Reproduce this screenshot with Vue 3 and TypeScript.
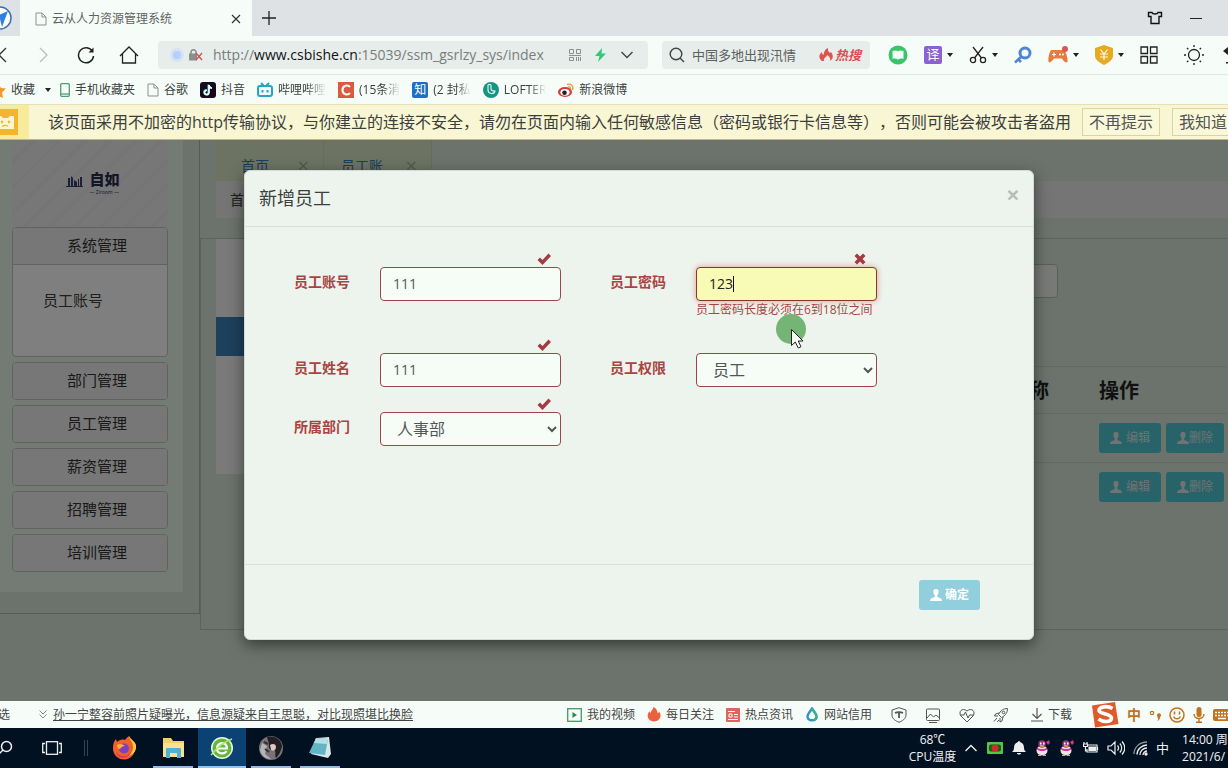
<script setup lang="ts">
import { ref } from 'vue'

const account = ref('111')
const password = ref('123')
const fullName = ref('111')
const role = ref('员工')
const department = ref('人事部')
const keyword = ref('中国多地出现汛情')
const menus: string[] = ['部门管理', '员工管理', '薪资管理', '招聘管理', '培训管理']
const rows: number[] = [1, 2]
</script>

<template>
  <div class="screen">
    <header class="tabbar">
      <svg class="brand" width="20" height="36" viewBox="0 0 20 36">
        <circle cx="0" cy="18" r="11" fill="#fff" stroke="#3d6fb5" stroke-width="1.5" />
        <path d="M8 11 L-8 18 L0 19 L2 27 Z" fill="#2f7fe0" />
      </svg>
      <div class="tab">
        <svg width="12" height="14" viewBox="0 0 12 14" fill="none" stroke="#8b918e"><path d="M1 1h6l4 4v8H1zM7 1v4h4" /></svg>
        <span class="tab-title">云从人力资源管理系统</span>
        <button class="plain" aria-label="关闭标签"><svg width="10" height="10" viewBox="0 0 10 10" stroke="#333" stroke-width="1.2"><path d="M1 1l8 8M9 1l-8 8" /></svg></button>
      </div>
      <button class="plain plus" aria-label="新标签"><svg width="14" height="14" viewBox="0 0 14 14" stroke="#222" stroke-width="1.3"><path d="M7 0v14M0 7h14" /></svg></button>
      <div class="win">
        <button class="plain" aria-label="皮肤"><svg width="16" height="14" viewBox="0 0 16 14" fill="none" stroke="#111" stroke-width="1.4"><path d="M5 1.5H1.5V5.500H4V12.500H12V5.500H14.500V1.500H11C10.500 3.500 5.500 3.500 5 1.500z" /></svg></button>
        <button class="plain" aria-label="最小化"><svg width="12" height="14" viewBox="0 0 12 14" stroke="#222"><path d="M0 7.5h12" /></svg></button>
      </div>
    </header>

    <div class="toolbar">
      <div class="nav">
        <button class="plain" aria-label="后退"><svg width="7" height="18" viewBox="0 0 7 18" fill="none" stroke="#333" stroke-width="1.3"><path d="M6 2L-1 9l7 7" /></svg></button>
        <button class="plain" aria-label="前进"><svg width="10" height="18" viewBox="0 0 10 18" fill="none" stroke="#b9bfbc" stroke-width="1.3"><path d="M1 2l7 7-7 7" /></svg></button>
        <button class="plain" aria-label="刷新"><svg width="18" height="18" viewBox="0 0 18 18" fill="none" stroke="#222" stroke-width="1.5"><path d="M15.500 5.500A7.500 7.500 0 1 0 16.500 10" /><path d="M16.500 1.500v5h-5z" fill="#222" stroke="none" /></svg></button>
        <button class="plain" aria-label="主页"><svg width="20" height="18" viewBox="0 0 20 18" fill="none" stroke="#222" stroke-width="1.3"><path d="M1 10L10 1l9 9M3.500 8v9h13V8" /></svg></button>
      </div>
      <div class="address">
        <svg width="14" height="14" viewBox="0 0 14 14"><circle cx="7" cy="7" r="7" fill="#d5e2f5" /><circle cx="7" cy="7" r="4" fill="#b5cff6" /></svg>
        <svg class="lock" width="14" height="12" viewBox="0 0 14 12"><path d="M2 5V3.500C2 0 7 0 7 3V5" fill="none" stroke="#8a8f8c" stroke-width="1.500" /><rect x="0" y="4.500" width="8" height="7" fill="#8a8f8c" /><path d="M7 4l6 7M13 4l-6 7" stroke="#d0504c" stroke-width="1.300" /></svg>
        <a class="url" href="#">http://<b>www.csbishe.cn</b>:15039/ssm_gsrlzy_sys/index</a>
        <div class="address-tools">
          <svg width="12" height="12" viewBox="0 0 12 12" fill="none" stroke="#8a908d"><path d="M.5.5h4v4h-4zM7.500.5h4v4h-4zM0 6.500h12M.5 8.500h4v3h-4zM7.500 8v4M9.500 8v4M11.500 8v4" /></svg>
          <svg width="11" height="14" viewBox="0 0 11 14"><path d="M7 0L0 8h4.500L3 14 11 5.500H6.500z" fill="#2fc977" /></svg>
          <svg width="14" height="8" viewBox="0 0 14 8" fill="none" stroke="#444" stroke-width="1.400"><path d="M1.500 1L7 6.500 12.500 1" /></svg>
        </div>
      </div>
      <div class="search">
        <svg width="16" height="16" viewBox="0 0 16 16" fill="none" stroke="#444" stroke-width="1.400"><circle cx="7" cy="7" r="5.800" /><path d="M11 11l4 4" /></svg>
        <input v-model="keyword" aria-label="搜索" />
        <span class="hot"><svg width="14" height="14" viewBox="0 0 14 14"><path d="M3 13C-1 10 0 6 3 4c0 2 .5 2.500 1.500 3C5 4 6 1 9 0c-.5 3 1 4 2 5l1-1c3 4 2 7-1 9 1-3-1-5-3-6 0 2-4 3-3 6z" fill="#e0524e" /></svg>热搜</span>
      </div>
      <div class="tools">
        <button class="plain" aria-label="阅读"><svg width="20" height="20" viewBox="0 0 20 20"><circle cx="10" cy="10" r="9.500" fill="#37c46b" /><path d="M4.500 6C7 5 9 5.500 10 6.500 11 5.500 13 5 15.500 6v8c-2-.7-4-.5-5.500.7C8.500 13.500 6.500 13.300 4.500 14z" fill="#f2fdf6" /></svg></button>
        <button class="plain" aria-label="翻译"><span class="yi">译</span><i class="caret"></i></button>
        <button class="plain" aria-label="截图"><svg width="18" height="18" viewBox="0 0 18 18" fill="none" stroke="#222" stroke-width="1.300"><path d="M4 1l8.500 11M14 1L5.500 12" /><circle cx="4" cy="14" r="2.600" /><circle cx="14" cy="14" r="2.600" /></svg><i class="caret"></i></button>
        <button class="plain" aria-label="密码"><svg width="18" height="18" viewBox="0 0 18 18" fill="none" stroke="#5083d4"><circle cx="11" cy="7" r="5" stroke-width="3" /><path d="M7.500 10.500L1 16.500M4 13l3 3" stroke-width="2.600" /></svg></button>
        <button class="plain" aria-label="游戏"><svg width="20" height="18" viewBox="0 0 20 18"><path d="M3 4h13c2 2 4 8 3.500 12-2 1.500-4-1-5.500-3.500H6C4 15 2 17.500.5 16 0 12 1 7 3 4z" fill="#ea7a3b" /><path d="M4 8.500h4M6 6.500v4" stroke="#fff" stroke-width="1.200" /><circle cx="12" cy="8.500" r="1" fill="#fff" /><circle cx="15" cy="8.500" r="1" fill="#fff" /><circle cx="17" cy="3" r="3" fill="#d8555a" /></svg><i class="caret"></i></button>
        <button class="plain" aria-label="钱包"><svg width="18" height="20" viewBox="0 0 18 20"><path d="M9 0l9 3v8c0 4-5 7-9 9-4-2-9-5-9-9V3z" fill="#e6ab22" /><path d="M5.500 4.500L9 9l3.500-4.500M5 9h8M5 12h8M9 9v6" fill="none" stroke="#fff8dd" stroke-width="1.200" /></svg><i class="caret"></i></button>
        <button class="plain" aria-label="应用"><svg width="18" height="18" viewBox="0 0 18 18" fill="none" stroke="#222" stroke-width="1.300"><path d="M1 1h6.500v6.500H1zM10.500 1H17v6.500h-6.500zM1 10.500h6.500V17H1zM10.500 10.500H17V17h-6.500z" /></svg></button>
        <span class="divider"></span>
        <button class="plain" aria-label="亮度"><svg width="20" height="20" viewBox="0 0 20 20" fill="none" stroke="#222" stroke-width="1.300"><circle cx="10" cy="10" r="5.500" /><path d="M10 0v2M10 18v2M0 10h2M18 10h2M3 3l1.300 1.300M15.700 15.700L17 17M17 3l-1.300 1.300M3 17l1.300-1.300" /></svg></button>
        <button class="plain" aria-label="撤销"><svg width="12" height="18" viewBox="0 0 12 18"><path d="M3 5l5-4v8zM7 4h5v2H7zM6 16h6v1.500H6z" fill="#222" /></svg></button>
      </div>
    </div>

    <nav class="bookmarks">
      <a href="#" class="fav"><svg width="6" height="16" viewBox="0 0 6 16"><path d="M-2 1L1 6l5 .5-4 4 1 5.500-5-2z" fill="#f09a28" /></svg>收藏<i class="caret"></i></a>
      <a href="#"><svg width="10" height="14" viewBox="0 0 10 14" fill="none" stroke="#4f9e72" stroke-width="1.300"><rect x=".7" y=".7" width="8.600" height="12.600" rx="1" /><path d="M1 11h8" /></svg>手机收藏夹</a>
      <a href="#"><svg width="12" height="14" viewBox="0 0 12 14" fill="none" stroke="#8b918e"><path d="M1 1h6l4 4v8H1zM7 1v4h4" /></svg>谷歌</a>
      <a href="#"><svg width="16" height="16" viewBox="0 0 16 16"><rect width="16" height="16" rx="3" fill="#140a1a" /><path d="M9 3v7.500a2.200 2.200 0 1 1-2-2.200M9 3c.3 2 1.500 3 3 3.200" fill="none" stroke="#35d9dc" stroke-width="1.800" transform="translate(-.6 -.4)" /><path d="M9 3v7.500a2.200 2.200 0 1 1-2-2.200M9 3c.3 2 1.500 3 3 3.200" fill="none" stroke="#fff" stroke-width="1.600" /></svg>抖音</a>
      <a href="#"><svg width="16" height="16" viewBox="0 0 16 16" fill="none" stroke="#22a7c4" stroke-width="2"><rect x="1" y="4" width="14" height="10" rx="2" /><path d="M4 1l2.500 2.500M12 1L9.500 3.500M5.500 8v2.500M10.500 8v2.500" /></svg><span class="fade">哔哩哔哩</span></a>
      <a href="#"><svg width="16" height="16" viewBox="0 0 16 16"><rect width="16" height="16" fill="#dc5a3c" /><path d="M12 5C10 2.500 4.500 3 4.500 8s5.500 5.500 7.500 3" fill="none" stroke="#fff" stroke-width="2" /></svg><span class="fade">(15条消</span></a>
      <a href="#"><span class="zhi">知</span><span class="fade">(2 封私</span></a>
      <a href="#"><svg width="16" height="16" viewBox="0 0 16 16"><circle cx="8" cy="8" r="8" fill="#159481" /><path d="M5 3v5c0 4 6 5 7 1-2 0-4 0-4-2V3.500C8 2 5 2 5 3.500" fill="none" stroke="#d8f3ec" stroke-width="1.200" /></svg><span class="fade">LOFTER</span></a>
      <a href="#"><svg width="16" height="16" viewBox="0 0 16 16"><ellipse cx="7" cy="10" rx="7" ry="5" fill="#d33c38" /><ellipse cx="7" cy="10.300" rx="4.600" ry="3.400" fill="#fff" /><circle cx="6.500" cy="10.700" r="2.300" fill="#222" /><path d="M9 2.500c4-1.500 7 2 5.500 5.500M10 5c1.500-.5 3 .5 2.300 2.300" fill="none" stroke="#eb9a35" stroke-width="1.400" /></svg>新浪微博</a>
    </nav>

    <div class="warning" role="alert">
      <div class="warn-icon"><svg width="18" height="26" viewBox="0 0 18 26"><rect width="18" height="26" fill="#f2b52b" /><path d="M-4 7h5l2 2h5l2-2h4v13H-4z" fill="#fdf6d5" /><path d="M1 12l2 2M3 12l-2 2M8 12l2 2M10 12l-2 2M2 17.500c2-1.500 5-1.500 6 0" stroke="#f2b52b" stroke-width="1.200" fill="none" /></svg></div>
      <p>该页面采用不加密的http传输协议，与你建立的连接不安全，请勿在页面内输入任何敏感信息（密码或银行卡信息等），否则可能会被攻击者盗用</p>
      <button>不再提示</button>
      <button>我知道了</button>
    </div>

    <main class="page">
      <aside>
        <div class="side-panel">
          <div class="logo">
            <svg width="17" height="12" viewBox="0 0 17 12"><path d="M0 11h17v1H0zM2 3h2v8H2zM5 1l2 2v8H5zM8 5l3 2v4H8zM12 4h1v7h-1zM14 2h2v9h-2z" fill="#3b4270" /></svg>
            <div><strong>自如</strong><small>— Ziroom —</small></div>
          </div>
          <section class="group">
            <button class="group-head">系统管理</button>
            <div class="group-body"><a href="#">员工账号</a></div>
          </section>
          <section v-for="menu in menus" :key="menu" class="group">
            <button class="group-head">{{ menu }}</button>
          </section>
        </div>
      </aside>
      <div class="content">
        <div class="page-tabs">
          <a href="#">首页<span>×</span></a>
          <a href="#">员工账<span>×</span></a>
        </div>
        <div class="crumb">首页</div>
        <div class="work">
          <div class="card"><div class="card-active"></div></div>
          <div class="records">
            <input class="filter" aria-label="查询" />
            <table>
              <thead>
                <tr><th></th><th class="dept">部门名称</th><th class="ops">操作</th></tr>
              </thead>
              <tbody>
                <tr v-for="row in rows" :key="row">
                  <td></td><td></td>
                  <td><div class="row-actions">
                    <button class="info"><svg class="user" viewBox="0 0 12 12"><path d="M6 0C3.500 0 3.200 2 3.500 4c.2 1 .7 1.700 1.200 2.300V8L1 9.500Q0 10 0 12h12q0-2-1-2.500L7.300 8V6.300C7.800 5.700 8.300 5 8.500 4 8.800 2 8.500 0 6 0z" /></svg> 编辑</button>
                    <button class="info tight"><svg class="user" viewBox="0 0 12 12"><path d="M6 0C3.500 0 3.200 2 3.500 4c.2 1 .7 1.700 1.200 2.300V8L1 9.500Q0 10 0 12h12q0-2-1-2.500L7.300 8V6.300C7.800 5.700 8.300 5 8.500 4 8.800 2 8.500 0 6 0z" /></svg>删除</button>
                  </div></td>
                </tr>
              </tbody>
            </table>
          </div>
        </div>
      </div>

      <div class="backdrop">
        <form class="modal" role="dialog" aria-labelledby="dialog-title" @submit.prevent>
          <div class="modal-head">
            <h4 id="dialog-title">新增员工</h4>
            <button type="button" class="plain close" aria-label="关闭">×</button>
          </div>
          <div class="modal-body">
            <div class="field">
              <label for="account">员工账号</label>
              <div class="control">
                <input id="account" v-model="account" />
                <svg class="mark" viewBox="0 0 14 14"><path d="M.5 8L3 5.500 5.500 8 11.500 1.500 14 4 5.500 13z" /></svg>
              </div>
            </div>
            <div class="field">
              <label for="password">员工密码</label>
              <div class="control">
                <input id="password" v-model="password" class="focused" />
                <span class="text-caret"></span>
                <svg class="mark" viewBox="0 0 14 14"><path d="M4 1.500l3 3 3-3L12.500 4l-3 3 3 3L10 12.500l-3-3-3 3L1.500 10l3-3-3-3z" /></svg>
                <small class="help">员工密码长度必须在6到18位之间</small>
              </div>
            </div>
            <div class="field">
              <label for="fullname">员工姓名</label>
              <div class="control">
                <input id="fullname" v-model="fullName" />
                <svg class="mark" viewBox="0 0 14 14"><path d="M.5 8L3 5.500 5.500 8 11.500 1.500 14 4 5.500 13z" /></svg>
              </div>
            </div>
            <div class="field">
              <label for="role">员工权限</label>
              <div class="control">
                <select id="role" v-model="role"><option>员工</option></select>
              </div>
            </div>
            <div class="field">
              <label for="department">所属部门</label>
              <div class="control">
                <select id="department" v-model="department"><option>人事部</option></select>
                <svg class="mark" viewBox="0 0 14 14"><path d="M.5 8L3 5.500 5.500 8 11.500 1.500 14 4 5.500 13z" /></svg>
              </div>
            </div>
          </div>
          <div class="modal-foot">
            <button class="info submit"><svg class="user" viewBox="0 0 12 12"><path d="M6 0C3.500 0 3.200 2 3.500 4c.2 1 .7 1.700 1.200 2.300V8L1 9.500Q0 10 0 12h12q0-2-1-2.500L7.300 8V6.300C7.800 5.700 8.300 5 8.500 4 8.800 2 8.500 0 6 0z" /></svg> 确定</button>
          </div>
          <svg class="pointer" width="30" height="36" viewBox="0 0 30 36"><circle cx="15" cy="15" r="15" fill="#74b474" /><path d="M15.500 15.500v16l3.800-3.500 3 6 2.700-1.300-2.800-5.700h4.800z" fill="#fff" stroke="#222" /></svg>
        </form>
      </div>
    </main>

    <footer class="statusbar">
      <span class="pick">选</span>
      <svg width="8" height="9" viewBox="0 0 8 9" fill="none" stroke="#888"><path d="M.5.5L4 4 7.500.5M.5 4.500L4 8l3.500-3.500" /></svg>
      <a class="news" href="#">孙一宁整容前照片疑曝光，信息源疑来自王思聪，对比现照堪比换脸</a>
      <div class="status-links">
        <a href="#"><svg width="15" height="14" viewBox="0 0 15 14" fill="none" stroke="#3f9b69" stroke-width="1.300"><rect x=".7" y=".7" width="13.600" height="12.600" /><path d="M5.500 4v6l4.500-3z" fill="#2b8755" stroke="none" /></svg>我的视频</a>
        <a href="#"><svg width="14" height="15" viewBox="0 0 14 15"><path d="M6.500 0c-.3 2.500-2.500 3.500-3 6C3 5.500 2.600 5 2.500 4.200 0 7 0 11 3 13.300c2 1.500 6 1.500 8 0C14.500 10.500 14 7 12 4.500c-.2 1-.6 1.500-1.300 2C10.500 3.500 9 1.200 6.500 0z" fill="#ec6040" /></svg>每日关注</a>
        <a href="#"><svg width="14" height="14" viewBox="0 0 14 14"><rect width="14" height="14" rx="1" fill="#dc655f" /><path d="M2 3.500h7M3 6h3v3H3zM8 6.500h4M8 9h4M2 11.500h10" fill="none" stroke="#fff" /></svg>热点资讯</a>
        <a href="#"><svg width="14" height="15" viewBox="0 0 14 15"><path d="M7 1.500C5 5 2.500 6.500 2.500 9.500c0 5 9 5 9 0C11.500 6.500 9 5 7 1.500z" fill="none" stroke="#2e8fd1" stroke-width="2.400" /><path d="M7 1.500c2 3.500 4.500 5 4.500 8 0 2-1.500 3.500-3 3.800" fill="none" stroke="#36b38c" stroke-width="2.400" /></svg>网站信用</a>
      </div>
      <div class="status-icons">
        <svg width="16" height="16" viewBox="0 0 16 16"><path d="M8 .7L15 3v5c0 4-4 6-7 7.300C5 14 1 12 1 8V3z" /><path d="M4 6c2-1 6-1 8 0M8 5.500V11" stroke-width="1.800" /></svg>
        <svg width="16" height="16" viewBox="0 0 16 16"><rect x="1.500" y="2" width="13" height="11.500" rx="1" /><path d="M2 11l3.500-4 3 3L11 8l3.500 3M4 15.500h8" /></svg>
        <svg width="16" height="16" viewBox="0 0 16 16"><path d="M8 15L2 9C-1 5 3 0 8 4c5-4 9 1 6 5zM1 8h4l1.500-3L9 11l1.500-3H15" /></svg>
        <svg width="16" height="16" viewBox="0 0 16 16"><path d="M14.500 1.500c-4 0-7 2-9 6l3 3c4-2 6-5 6-9zM6 6L2.500 7 1.500 9h3.500M10 10l-1 4-2 1v-4M4 11l-3 3.500M6 13l-2 2" /><circle cx="10.500" cy="5.500" r="1.300" /></svg>
      </div>
      <a class="download" href="#"><svg width="12" height="14" viewBox="0 0 12 14" fill="none" stroke="#555" stroke-width="1.200"><path d="M6 0v10M1.500 6L6 10.500 10.500 6M0 13h12" /></svg>下载</a>
      <div class="ime">
        <svg width="28" height="27" viewBox="0 0 28 27"><path d="M1 4.500L24 1l3.500 22L4 26.500z" fill="#df5a2b" /><path d="M21.500 7.500C16 4 8 6 8 9.500s12.500 3 12.500 7.500-8 4.500-13 1" fill="none" stroke="#fff" stroke-width="3.600" /></svg>
        <b>中</b>
        <svg width="12" height="16" viewBox="0 0 12 16"><circle cx="3" cy="6" r="1.700" fill="none" stroke="#c2711c" stroke-width="1.200" /><path d="M8 8.500a2 2 0 1 1 3 1.500c0 2-1 3.500-2.500 4 .7-1 .8-2 .5-2.500z" fill="#c2711c" /></svg>
        <svg width="16" height="16" viewBox="0 0 16 16" fill="none" stroke="#c2711c" stroke-width="1.500"><circle cx="8" cy="8" r="7" /><path d="M4.500 9.500c1.500 3 5.500 3 7 0M5.500 4.500v3M10.500 4.500v3" /></svg>
        <svg width="12" height="16" viewBox="0 0 12 16"><rect x="3.500" y="0" width="5" height="10" rx="2.500" fill="#c2711c" /><path d="M1 7c0 6 10 6 10 0M6 11.500V15M3 15.300h6" fill="none" stroke="#c2711c" stroke-width="1.400" /></svg>
        <svg width="18" height="14" viewBox="0 0 18 14"><rect y="1" width="18" height="12" rx="2" fill="#c2711c" /><path d="M2 4.500h14M2 7.500h14" stroke="#fff" stroke-width="1.500" stroke-dasharray="2 1" /><path d="M5 10.500h8" stroke="#fff" stroke-width="1.500" /></svg>
      </div>
    </footer>

    <div class="taskbar">
      <button class="plain task-search" aria-label="查找"><svg width="13" height="16" viewBox="0 0 13 16" fill="none" stroke="#eee" stroke-width="1.500"><circle cx="6.500" cy="6.500" r="5" /><path d="M3 10l-5 5" /></svg></button>
      <button class="plain task-view" aria-label="任务视图"><svg width="20" height="14" viewBox="0 0 20 14" fill="none" stroke="#eee" stroke-width="1.300"><rect x="4.500" y=".7" width="11" height="12.600" /><path d="M3 2.500H.7v9H3M17 2.500h2.300v9H17" /></svg></button>
      <span class="grip"></span>
      <div class="apps">
        <button class="plain" aria-label="Firefox"><svg width="24" height="24" viewBox="0 0 24 24"><path d="M1 12C1 8 2 5 4 3l1 3c2-2 5-3 8-2 1-2 3-3 4-4 0 3 6 5 6 12a11 11 0 0 1-22 1z" fill="#f0602c" /><path d="M17 0c0 4 4 5 4 11 0 6-4 9-8 9 8 0 12-5 11-11-1-4-5-5-7-9z" fill="#ffc83c" /><path d="M4 16c3 5 11 6 15 0-1 6-13 9-15 0z" fill="#e52e62" /><circle cx="12" cy="12.500" r="5" fill="#7b3fc0" /><path d="M5 9c3-2 6-1 8 1-2 0-4 1-5 3-2 0-3-2-3-4z" fill="#ffad33" /></svg></button>
        <button class="plain open" aria-label="文件"><svg width="24" height="22" viewBox="0 0 24 22"><path d="M2 1h8l2 3h11v16H2z" fill="#f4cf6d" /><path d="M2 6h21v14H2z" fill="#fbe093" /><path d="M5 21v-9q0-1 1-1h13q1 0 1 1v9h-4v-5H9v5z" fill="#4fb1cf" /></svg></button>
        <button class="plain open active" aria-label="浏览器"><svg width="24" height="24" viewBox="0 0 24 24"><circle cx="12" cy="12" r="11" fill="#eaf8e0" /><circle cx="12" cy="12" r="9.500" fill="#5fb83c" /><path d="M6.500 12.500H17C17 5 7 5.500 7 12.500c0 6 7.500 6 9.500 2.500" fill="none" stroke="#fff" stroke-width="2.200" /><path d="M1 19C5 15 10 7 22 3" fill="none" stroke="#b9e86e" stroke-width="1.500" /></svg></button>
        <button class="plain open" aria-label="头像"><svg width="24" height="24" viewBox="0 0 24 24"><circle cx="12" cy="12" r="12" fill="#777376" /><path d="M8 1c8-2 15 3 15 10-2 6-3 8-6 11-2-3 1-6-2-8-4 1-6-2-5-6z" fill="#221e22" /><path d="M11 9c3-2 6-1 6 2s-3 5-5 3z" fill="#e0c8c4" /><path d="M3 7l5 3-2 8 6 5c-6 0-10-4-11-9z" fill="#b8b3b6" /><path d="M5 6l4 2M6 13l4 3" stroke="#333" stroke-width="2" /></svg></button>
        <button class="plain open" aria-label="记事本"><svg width="24" height="24" viewBox="0 0 24 24"><path d="M9 2l12-1 2 17-3 4-17-4z" fill="#d8e7ea" /><path d="M8 2l12 1-3 16L1 17z" fill="#62b6c4" /><path d="M8 2l12 1-1 5L6 7z" fill="#b5dfe5" /></svg></button>
      </div>
      <div class="tray">
        <div class="temp"><span>68℃</span><span>CPU温度</span></div>
        <svg width="16" height="16" viewBox="0 0 16 16" fill="none" stroke="#eee" stroke-width="1.400"><path d="M2.500 11L8 5.500l5.500 5.500" /></svg>
        <svg width="16" height="16" viewBox="0 0 16 16"><rect y="2" width="16" height="12" rx="1" fill="#52c743" /><rect x="2" y="4.500" width="12" height="7" rx="2" fill="#1c5a1b" /><circle cx="8" cy="8" r="3.500" fill="#d02d28" /></svg>
        <svg width="16" height="16" viewBox="0 0 16 16"><path d="M8 1c1 0 1 1 1 1 3 1 4 3 4 6 0 2 1 3 2 4H1c1-1 2-2 2-4 0-3 1-5 4-6 0 0 0-1 1-1zM6 13h4c0 2-4 2-4 0z" fill="#eee" /></svg>
        <svg v-for="n in 2" :key="n" width="16" height="16" viewBox="0 0 16 16"><ellipse cx="7" cy="10.500" rx="5.500" ry="5" fill="#e9e4ee" /><circle cx="7" cy="4" r="3.800" fill="#8c3a78" /><path d="M2 7.500c3 2 7 2 10 0v2c-3 2-7 2-10 0zM11 2l3-2 1 3-2 2z" fill="#d6338a" /><path d="M5 3.500h1.500M8 3.500h1.500" stroke="#fff" stroke-width="2" /><path d="M5 6h4M3 15.500h3M8 15.500h3" stroke="#efaa30" stroke-width="1.500" /></svg>
        <svg width="16" height="16" viewBox="0 0 16 16" fill="none" stroke="#eee" stroke-width="1.200"><path d="M5 5h9v7H4V9M14.500 7v3M1 2v2M4 2v2M.5 4h4v2.500h-4zM2.500 7v4H4" /><path d="M6 7h6.500v3.500H6z" fill="#eee" /></svg>
        <svg width="18" height="16" viewBox="0 0 18 16" fill="none" stroke="#eee" stroke-width="1.200"><path d="M1 6h3l4-4v12l-4-4H1zM10.500 5.500c1.300 1.500 1.300 3.500 0 5M12.800 3.500c2.500 2.500 2.500 6.500 0 9M15 1.500c3.500 4 3.500 9 0 13" /></svg>
        <svg width="16" height="16" viewBox="0 0 16 16" fill="none" stroke="#eee" stroke-width="1.300"><path d="M1 14C1 7 7 2 14 2" opacity=".6" /><path d="M4 14.500C4 9 9 5 14 5M7 15c0-4 3-7 7-7M10 15c0-2 2-4 4-4" /><circle cx="13" cy="14" r="1" fill="#eee" /></svg>
        <span class="lang">中</span>
        <div class="clock"><span>14:00 周</span><span>2021/6/</span></div>
      </div>
    </div>
  </div>
</template>

<style>
body {
  overflow: hidden;
}
</style>

<style scoped>
* {
  box-sizing: border-box;
}
.screen {
  display: flex;
  flex-direction: column;
  height: 100vh;
  overflow: hidden;
  background: #f6fdf8;
  color: #3c3f3d;
  font: 12px/16px "Open Sans", "Noto Sans CJK SC", sans-serif;
}
button,
input,
select {
  font: inherit;
  color: inherit;
}
a {
  color: inherit;
  text-decoration: none;
}
svg {
  flex: none;
  display: block;
}
.plain {
  display: flex;
  align-items: center;
  gap: 5px;
  flex: none;
  padding: 0;
  border: 0;
  background: none;
}
.caret {
  flex: none;
  border: 3px solid transparent;
  border-top: 4px solid #222;
  border-bottom: 0;
}
.tabbar {
  display: flex;
  align-items: center;
  flex: none;
  height: 36px;
  background: #dee2e5;
}
.tab {
  display: flex;
  align-items: center;
  gap: 5px;
  width: 232px;
  height: 36px;
  padding: 2px 11px 0 15px;
  background: #f6fdf8;
  color: #606361;
}
.tab-title {
  flex: 1;
}
.plus {
  margin-left: 10px;
}
.win {
  display: flex;
  gap: 27px;
  margin-left: auto;
  padding-right: 26px;
}
.toolbar {
  display: flex;
  align-items: center;
  flex: none;
  height: 39px;
  border-bottom: 1px solid #e2e8e5;
}
.nav {
  display: flex;
  align-items: center;
  gap: 32px;
  width: 158px;
}
.nav .plain:nth-child(3) {
  margin-left: -4px;
}
.nav .plain:nth-child(4) {
  margin-left: -8px;
}
.address {
  display: flex;
  align-items: center;
  flex: 1;
  min-width: 0;
  height: 28px;
  padding: 0 14px 0 12px;
  border-radius: 4px;
  background: #e7edeb;
}
.lock {
  margin: 0 10px 0 5px;
}
.url {
  font-size: 14px;
  line-height: 20px;
  color: #777e7b;
  white-space: nowrap;
}
.url b {
  font-weight: 400;
  color: #111;
}
.address-tools {
  display: flex;
  align-items: center;
  gap: 14px;
  margin-left: auto;
}
.search {
  display: flex;
  align-items: center;
  gap: 7px;
  flex: none;
  width: 208px;
  height: 28px;
  margin-left: 14px;
  padding: 0 9px 0 7px;
  border-radius: 4px;
  background: #e7edeb;
  color: #5c605e;
  font-size: 13px;
}
.search input {
  flex: 1;
  min-width: 0;
  padding: 0;
  border: 0;
  background: none;
}
.hot {
  display: flex;
  align-items: center;
  gap: 2px;
  color: #dc4d50;
  font-weight: 700;
  font-style: italic;
}
.tools {
  display: flex;
  align-items: center;
  gap: 16px;
  flex: none;
  width: 358px;
  padding-left: 18px;
  overflow: hidden;
}
.yi,
.zhi {
  width: 18px;
  height: 18px;
  border-radius: 2px;
  background: #8a62d2;
  color: #fff;
  font-size: 13px;
  line-height: 17px;
  text-align: center;
}
.zhi {
  width: 16px;
  height: 16px;
  background: #1f6fc4;
  font-size: 12px;
  line-height: 15px;
}
.divider {
  width: 1px;
  height: 16px;
  margin: 0 -3px;
  background: #d3d8d6;
}
.bookmarks {
  display: flex;
  align-items: center;
  gap: 12px;
  flex: none;
  height: 29px;
}
.bookmarks a {
  display: flex;
  align-items: center;
  gap: 5px;
  white-space: nowrap;
}
.bookmarks .fav {
  width: 48px;
}
.fav .caret {
  margin-left: 5px;
}
.fade {
  mask-image: linear-gradient(to right, #000 60%, transparent);
}
.warning {
  display: flex;
  align-items: center;
  flex: none;
  height: 36px;
  border-top: 1px solid #e6e0b4;
  border-bottom: 1px solid #b9b88f;
  background: #f8f6d3;
  font-size: 16px;
  line-height: 20px;
  white-space: nowrap;
  overflow: hidden;
}
.warn-icon {
  display: flex;
  align-items: center;
  align-self: stretch;
  flex: none;
  width: 29px;
  background: #f8ec9c;
}
.warning p {
  flex: 1 0 auto;
  margin: 0 0 0 19px;
  text-spacing-trim: space-all;
}
.warning button {
  flex: none;
  height: 28px;
  margin-left: 6px;
  padding: 0 6px;
  border: 1px solid #ded39b;
  background: #f9f8d8;
  color: #555;
}
.warning button:last-child {
  margin: 0 -22px 0 12px;
}
.page {
  position: relative;
  display: flex;
  align-items: flex-start;
  flex: 1;
  min-height: 0;
  overflow: hidden;
  background: #d9e7d9;
  font-size: 14px;
  line-height: 20px;
}
aside {
  flex: none;
  width: 200px;
  padding-bottom: 21px;
  border-bottom: 1px solid #aab8aa;
  border-right: 1px solid #aab8aa;
}
.side-panel {
  width: 183px;
  padding: 0 15px 20px 12px;
  background: #e8f6ea;
}
.logo {
  display: flex;
  justify-content: center;
  gap: 6px;
  height: 87px;
  padding: 29px 0 0 6px;
  background: repeating-linear-gradient(135deg, #efefef 0 14px, #eaebec 14px 18px);
  color: #2b2b50;
}
.logo svg {
  margin-top: 6px;
}
.logo strong,
.logo small {
  display: block;
  font-weight: 900;
  font-size: 15px;
  line-height: 20px;
}
.logo small {
  font-size: 5px;
  line-height: 7px;
  font-weight: 400;
}
.group {
  margin-bottom: 5px;
  border: 1px solid #c2c6c2;
  border-radius: 4px;
  background: #fff;
  overflow: hidden;
}
.group:last-child {
  margin-bottom: 0;
}
.group-head {
  display: block;
  width: 100%;
  height: 36px;
  padding: 0 0 2px 14px;
  border: 0;
  background: #efefef;
  color: #333;
  font-size: 15px;
}
.group-body {
  height: 92px;
  padding: 25px 30px;
  border-top: 1px solid #c2c6c2;
  font-size: 15px;
}
.content {
  flex: 1;
  min-width: 0;
}
.page-tabs {
  display: flex;
  height: 41px;
  padding-left: 16px;
}
.page-tabs a {
  display: flex;
  justify-content: space-between;
  width: 108px;
  padding: 16px 14px 0 25px;
  border-right: 1px solid #cfdcbb;
  background: #dae6c6;
  color: #337ab7;
}
.page-tabs a + a {
  padding-left: 17px;
}
.page-tabs span {
  color: #a5b595;
  font-size: 20px;
}
.crumb {
  height: 37px;
  margin: 0 0 20px 16px;
  padding: 9px 14px;
  background: #e9eae8;
}
.work {
  display: flex;
  align-items: flex-start;
  height: 392px;
  padding-left: 15px;
  border: 1px solid #b8c5b8;
  border-right: 0;
}
.card {
  flex: none;
  width: 200px;
  height: 235px;
  padding-top: 78px;
  background: #f4f4f4;
}
.card-active {
  height: 39px;
  background: #3a80b8;
}
.records {
  flex: 1;
  min-width: 0;
  padding-top: 25px;
}
.filter {
  display: block;
  width: 200px;
  height: 34px;
  margin: 0 170px 68px auto;
  border: 1px solid #b5bfb5;
  border-radius: 4px;
  background: #f0f5f0;
}
table {
  width: 100%;
  border-collapse: collapse;
  table-layout: fixed;
}
th,
td {
  height: 49px;
  padding: 0 8px;
  border-top: 1px solid #c6d3c6;
  text-align: left;
}
th {
  height: 47px;
  padding-top: 2px;
  color: #222;
  font-size: 20px;
  font-weight: 700;
}
.dept {
  width: 130px;
}
.ops {
  width: 137px;
}
.row-actions {
  display: flex;
  gap: 5px;
}
.info {
  display: flex;
  align-items: center;
  gap: 4px;
  flex: none;
  height: 30px;
  padding: 0 11px;
  border: 0;
  border-radius: 3px;
  background: #4ec6d3;
  color: #fff;
  font-size: 12px;
  line-height: 18px;
  white-space: nowrap;
}
.row-actions .info {
  color: #dfe6e4;
}
.tight {
  gap: 0;
}
.user {
  width: 12px;
  height: 12px;
  fill: currentColor;
}
.backdrop {
  position: absolute;
  inset: 0;
  display: flex;
  align-items: flex-start;
  padding: 30px 194px 0 244px;
  background: rgba(0, 0, 0, 0.5);
}
.modal {
  position: relative;
  flex: 1;
  min-width: 0;
  border: 1px solid #d4dad5;
  border-radius: 6px;
  background: #edf4ee;
  box-shadow: 0 5px 15px rgba(0, 0, 0, 0.5);
}
.modal-head {
  display: flex;
  justify-content: space-between;
  align-items: flex-start;
  height: 56px;
  padding: 14px;
  border-bottom: 1px solid #d9dfda;
}
h4 {
  margin: 0;
  font-size: 18px;
  line-height: 26px;
  font-weight: 400;
}
.close {
  color: #b6bcb7;
  font: 700 21px/20px "Liberation Sans", sans-serif;
}
.modal-body {
  display: grid;
  grid-template-columns: repeat(2, 267px);
  column-gap: 49px;
  row-gap: 25px;
  align-content: start;
  min-height: 337px;
  padding: 40px 49px 0;
}
.field {
  display: flex;
  color: #a94442;
}
.field label {
  width: 86px;
  padding-top: 5px;
  font-weight: 700;
}
.control {
  position: relative;
  flex: 1;
}
.control input,
.control select {
  display: block;
  width: 100%;
  height: 34px;
  padding: 0 12px 2px;
  border: 1px solid #a0444a;
  border-radius: 4px;
  outline: 0;
  background: #f6fdf7;
  color: #555;
}
.control select {
  padding: 0 0 0 12px;
  font-size: 16px;
}
.control .focused {
  border-color: #843534;
  background: #f7fbb6;
  color: #222;
  box-shadow: 0 0 6px #e09a8a;
}
.text-caret {
  position: absolute;
  top: 9px;
  left: 37px;
  width: 1px;
  height: 16px;
  background: #111;
}
.mark {
  position: absolute;
  top: -15px;
  right: 10px;
  width: 14px;
  height: 14px;
  fill: #a23c40;
}
.help {
  display: block;
  margin-bottom: 10px;
  font-size: 12px;
  line-height: 17px;
  white-space: nowrap;
}
.modal-foot {
  display: flex;
  justify-content: flex-end;
  height: 75px;
  padding: 15px 53px;
  border-top: 1px solid #d9dfda;
}
.submit {
  gap: 3px;
  background: #91cfdc;
  font-weight: 700;
}
.pointer {
  position: absolute;
  top: 143px;
  left: 531px;
}
.statusbar {
  display: flex;
  align-items: center;
  flex: none;
  height: 27px;
  color: #444;
  white-space: nowrap;
  overflow: hidden;
}
.pick {
  margin: 0 29px 0 -2px;
}
.news {
  margin-left: 6px;
  text-decoration: underline;
}
.status-links,
.status-links a,
.status-icons,
.download,
.ime {
  display: flex;
  align-items: center;
  gap: 5px;
}
.status-links {
  gap: 12px;
  margin-left: auto;
}
.status-icons {
  gap: 18px;
  margin-left: 19px;
  fill: none;
  stroke: #555;
}
.download {
  margin-left: 22px;
}
.ime {
  gap: 8px;
  flex: none;
  width: 156px;
  padding-left: 19px;
  color: #c2711c;
  font-size: 14px;
  overflow: hidden;
}
.taskbar {
  display: flex;
  align-items: center;
  flex: none;
  height: 40px;
  background: #021121;
  color: #f0f2f4;
}
.task-view {
  margin-left: 29px;
}
.grip {
  width: 4px;
  height: 16px;
  margin: 0 12px 0 22px;
  border: 1px solid #39434f;
  border-width: 0 1px;
}
.apps {
  display: flex;
  gap: 1px;
}
.apps .plain {
  justify-content: center;
  width: 48px;
  height: 40px;
}
.apps .open {
  background: linear-gradient(#93b9e6, #93b9e6) center bottom / 40px 2px no-repeat;
}
.apps .active {
  background: #0b4173;
  box-shadow: inset 0 -2px #93c3f2;
}
.tray {
  display: flex;
  align-items: center;
  gap: 8px;
  flex: none;
  width: 318px;
  margin-left: auto;
  white-space: nowrap;
}
.temp,
.clock {
  display: flex;
  flex-direction: column;
  text-align: center;
}
.temp {
  width: 45px;
  align-items: center;
}
.lang {
  margin-left: -1px;
  font-size: 13px;
}
.clock {
  margin-left: 5px;
  text-align: left;
}
.temp span,
.clock span {
  line-height: 17px;
}
</style>
